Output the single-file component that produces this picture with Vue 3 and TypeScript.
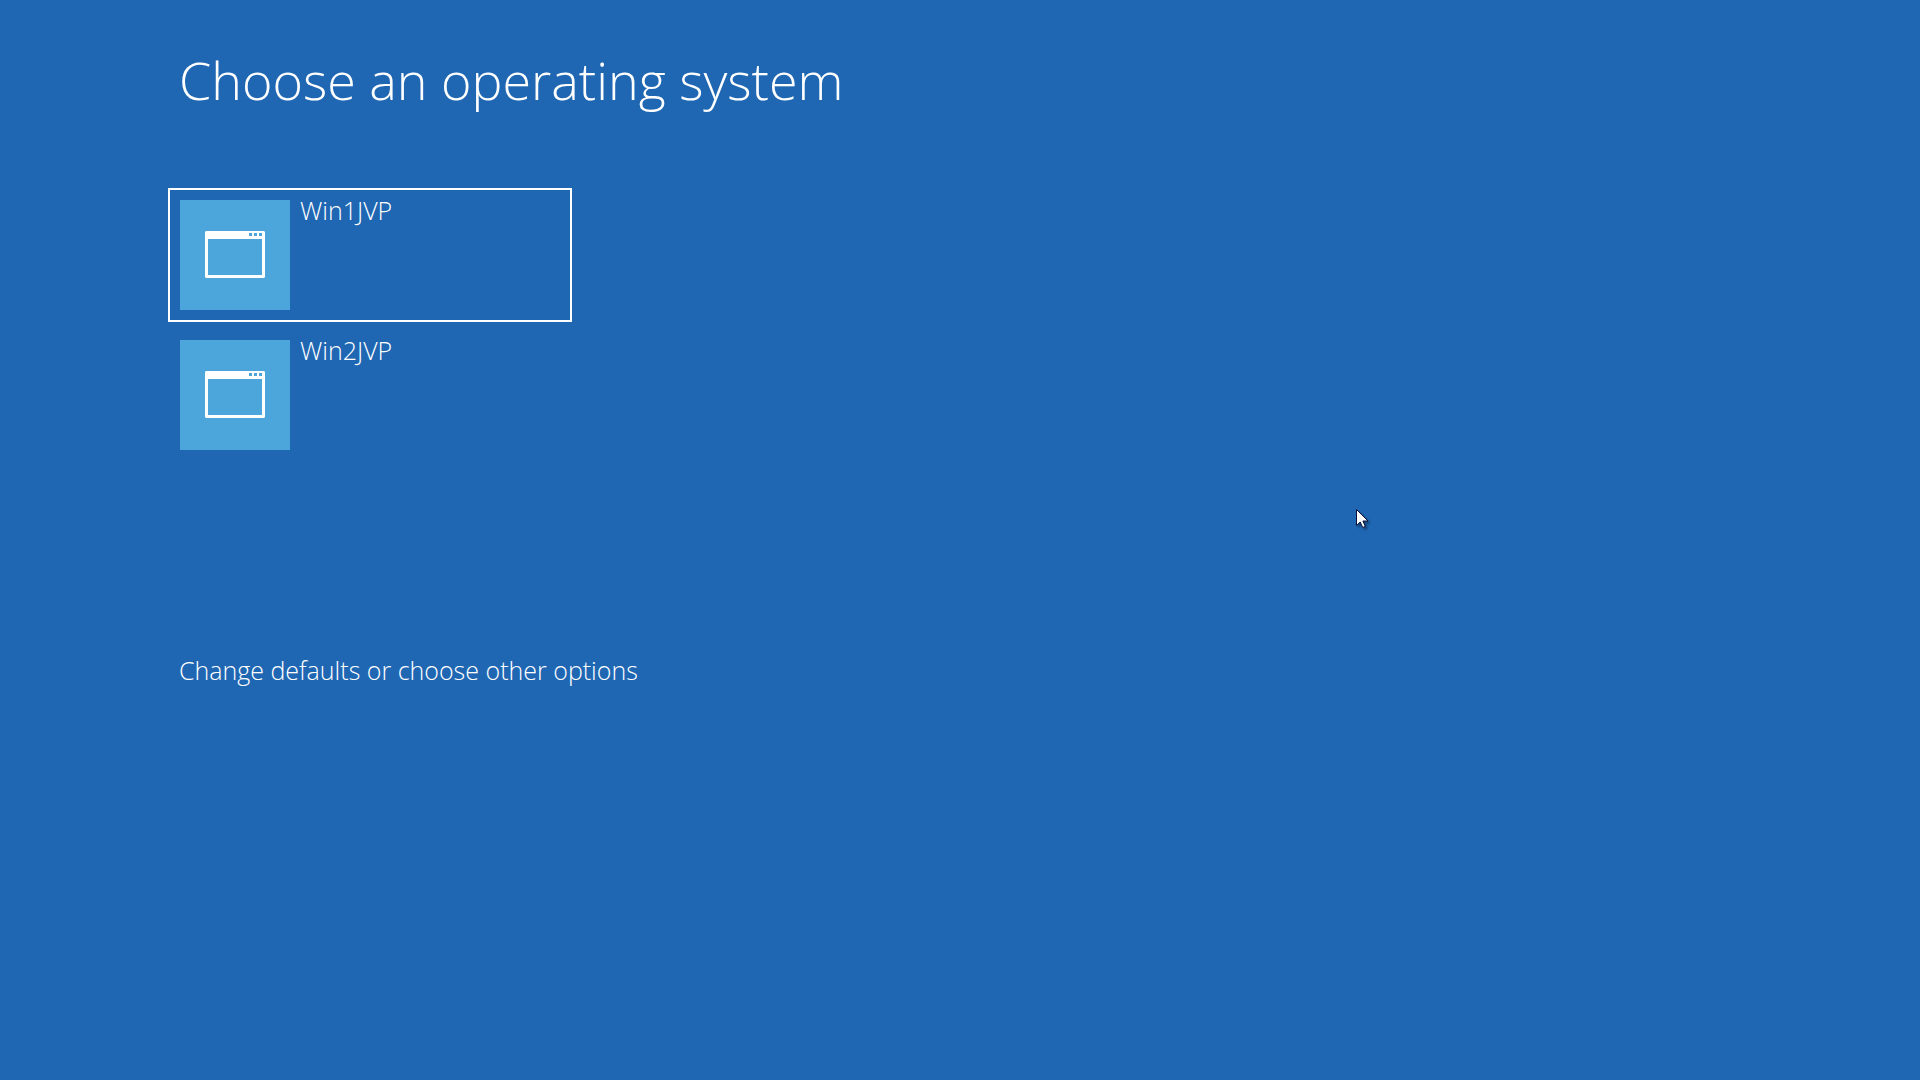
<script setup lang="ts">
import { ref } from 'vue'

interface BootEntry {
  id: number
  name: string
}

const entries: BootEntry[] = [
  { id: 1, name: 'Win1JVP' },
  { id: 2, name: 'Win2JVP' },
]

const selected = ref(1)
</script>

<template>
  <main class="boot-menu">
    <h1 class="title">Choose an operating system</h1>

    <ul class="entries">
      <li v-for="entry in entries" :key="entry.id">
        <button
          type="button"
          class="entry"
          :class="{ selected: entry.id === selected }"
          @click="selected = entry.id"
        >
          <span class="tile">
            <svg width="60" height="48" viewBox="0 0 60 48" fill="#fff" aria-hidden="true">
              <path
                fill-rule="evenodd"
                d="M1 0H59L60 1V46L59 47H1L0 46V1ZM3 8V44H57V8ZM44 2V5H47V2ZM49 2V5H52V2ZM54 2V5H57V2Z"
              />
            </svg>
          </span>
          <span class="name">{{ entry.name }}</span>
        </button>
      </li>
    </ul>

    <a class="options" href="#options">Change defaults or choose other options</a>

    <svg class="pointer" width="18" height="24" viewBox="0 0 18 24" aria-hidden="true">
      <path
        d="M.5.5V16.5L4.2 13L6.7 18.5L9.3 17.4L6.9 12H12Z"
        fill="#fff"
        stroke="#0a0f3c"
      />
    </svg>
  </main>
</template>

<style>
body {
  margin: 0;
  background: #1f67b3;
}
</style>

<style scoped>
.boot-menu {
  position: relative;
  box-sizing: border-box;
  min-height: 100vh;
  padding: 40px 168px;
  background: #1f67b3;
  color: #fff;
  font-family: "Open Sans", "Noto Sans", sans-serif;
  font-weight: 300;
}

.title {
  margin: 0 0 68px;
  padding-left: 11px;
  font-size: 52px;
  font-weight: 300;
  line-height: 80px;
}

.entries {
  display: flex;
  flex-direction: column;
  gap: 6px;
  margin: 0;
  padding: 0;
  list-style: none;
}

.entry {
  display: flex;
  align-items: flex-start;
  gap: 10px;
  box-sizing: border-box;
  width: 404px;
  max-width: 100%;
  padding: 10px;
  border: 2px solid transparent;
  background: none;
  color: inherit;
  font: inherit;
  text-align: left;
}

.entry.selected {
  border-color: #fff;
}

.tile {
  display: flex;
  flex: none;
  align-items: center;
  justify-content: center;
  width: 110px;
  height: 110px;
  background: #4ca6dc;
}

.name {
  font-size: 25px;
  line-height: 20px;
}

.options {
  display: block;
  width: fit-content;
  margin: 190px 0 0 11px;
  color: inherit;
  font-size: 25px;
  line-height: 36px;
  text-decoration: none;
}

.pointer {
  position: absolute;
  top: 509px;
  left: 1356px;
  filter: drop-shadow(2px 2px 1px rgba(0, 0, 0, 0.35));
}
</style>
